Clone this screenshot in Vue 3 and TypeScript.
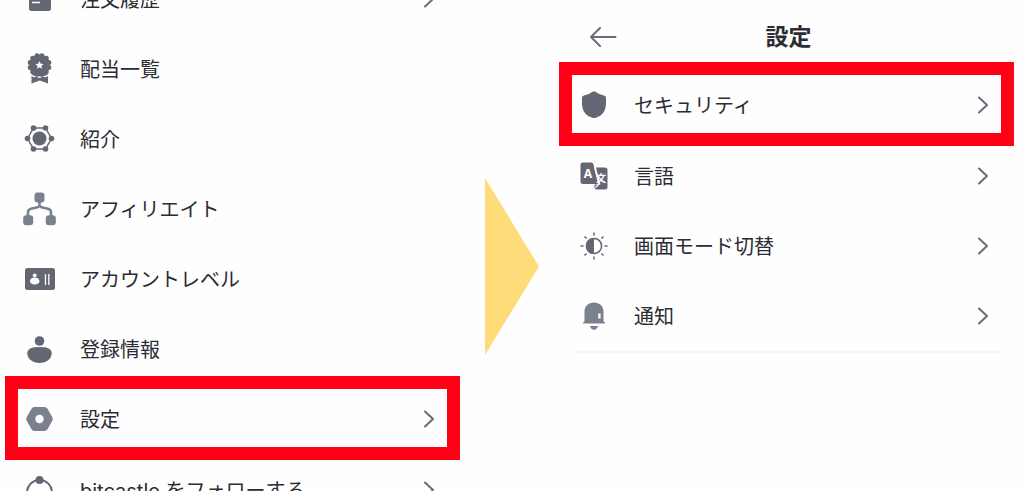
<script setup lang="ts">
interface MenuItem {
  icon: string
  label: string
  chevron?: boolean
  highlighted?: boolean
}

const accountMenu: MenuItem[] = [
  { icon: 'orders', label: '注文履歴', chevron: true },
  { icon: 'badge', label: '配当一覧' },
  { icon: 'referral', label: '紹介' },
  { icon: 'affiliate', label: 'アフィリエイト' },
  { icon: 'level', label: 'アカウントレベル' },
  { icon: 'person', label: '登録情報' },
  { icon: 'settings', label: '設定', chevron: true, highlighted: true },
  { icon: 'follow', label: 'bitcastle をフォローする', chevron: true },
]

const settingsMenu: MenuItem[] = [
  { icon: 'shield', label: 'セキュリティ', chevron: true, highlighted: true },
  { icon: 'language', label: '言語', chevron: true },
  { icon: 'theme', label: '画面モード切替', chevron: true },
  { icon: 'bell', label: '通知', chevron: true },
]

const panels = [
  { id: 'account', title: '', items: accountMenu },
  { id: 'settings', title: '設定', items: settingsMenu },
]

const rays = [0, 45, 90, 135, 180, 225, 270, 315]
const petals = Array.from({ length: 12 }, (_, i) => {
  const angle = ((i * 30 + 15) * Math.PI) / 180
  return { x: 16.5 + 9.6 * Math.cos(angle), y: 13 + 9.6 * Math.sin(angle) }
})
const nodes = [
  [4.5, 16.5],
  [10.5, 6],
  [22.5, 6],
  [28.5, 16.5],
  [22.5, 27],
  [10.5, 27],
]
</script>

<template>
  <main class="page">
    <template v-for="panel in panels" :key="panel.id">
      <svg v-if="panel.title" class="step" viewBox="0 0 54 177" aria-hidden="true">
        <path d="M0 0L54 88.5L0 177Z" fill="#ffdc7a" />
      </svg>
      <section class="panel" :class="panel.id">
        <header v-if="panel.title" class="header">
          <button class="back" type="button" aria-label="戻る">
            <svg width="28" height="22" viewBox="0 0 28 22" aria-hidden="true">
              <path d="M11 2L2 11L11 20M2 11H26.5" />
            </svg>
          </button>
          <h1 class="title">{{ panel.title }}</h1>
        </header>
        <ul class="menu">
          <li v-for="item in panel.items" :key="item.icon">
            <button class="row" :class="{ highlighted: item.highlighted }" type="button">
              <svg class="icon" viewBox="0 0 34 34" aria-hidden="true">
                <g v-if="item.icon === 'orders'">
                  <rect x="6" y="5" width="22" height="24" rx="2.5" />
                  <path class="cut-line" d="M9 20.5H17M9 14H25" />
                </g>
                <g v-else-if="item.icon === 'badge'">
                  <path d="M8.5 20H25V31.5L16.8 28.5L8.5 31.5Z" />
                  <path class="cut-line" d="M8 22.5Q11 26 13.5 23.5Q16.5 27 19.5 23.5Q22.5 26 25.5 22.5" />
                  <circle cx="16.5" cy="13" r="10.4" />
                  <circle v-for="(p, i) in petals" :key="i" :cx="p.x" :cy="p.y" r="2.5" />
                  <path class="cut" d="M16.5 9L17.7 11.7L20.6 12L18.4 13.9L19.1 16.8L16.5 15.3L13.9 16.8L14.6 13.9L12.4 12L15.3 11.7Z" />
                </g>
                <g v-else-if="item.icon === 'referral'">
                  <path class="line thin" d="M4.5 16.5L10.5 6H22.5L28.5 16.5L22.5 27H10.5Z" />
                  <circle cx="16.5" cy="16.5" r="7" />
                  <circle v-for="(n, i) in nodes" :key="i" :cx="n[0]" :cy="n[1]" r="2.8" />
                </g>
                <g v-else-if="item.icon === 'affiliate'" class="soft">
                  <path class="line thick" d="M16.5 8V14M5 25V20.5Q5 17.5 8 16.8L13.5 15.5Q16.5 14.8 16.5 13Q16.5 14.8 19.5 15.5L25 16.8Q28 17.5 28 20.5V25" />
                  <rect x="11.5" y="0.5" width="10" height="10" rx="3" />
                  <rect x="0.2" y="23.3" width="10" height="10" rx="3" />
                  <rect x="22.8" y="23.3" width="10" height="10" rx="3" />
                </g>
                <g v-else-if="item.icon === 'level'">
                  <rect x="2" y="6" width="30" height="22" rx="2.5" />
                  <circle class="cut" cx="11.7" cy="13.3" r="1.9" />
                  <ellipse class="cut" cx="11.7" cy="19" rx="4.8" ry="3.6" />
                  <path class="cut-line" d="M22.5 12V23M25.8 12V23" />
                </g>
                <g v-else-if="item.icon === 'person'">
                  <circle cx="16.5" cy="9" r="4.8" />
                  <path d="M11 15.2Q16.5 14.6 22 15.2C27 16 29 18.8 28.7 22C28 28 22 31 16.5 31S5 28 4.3 22C4 18.8 6 16 11 15.2Z" />
                </g>
                <g v-else-if="item.icon === 'settings'" class="soft">
                  <path d="M11.5 5H21.5Q23.5 5 24.5 6.8L29.3 15.2Q30.3 17 29.3 18.8L24.5 27.2Q23.5 29 21.5 29H11.5Q9.5 29 8.5 27.2L3.7 18.8Q2.7 17 3.7 15.2L8.5 6.8Q9.5 5 11.5 5Z" />
                  <circle class="cut" cx="16.5" cy="17" r="4.2" />
                </g>
                <g v-else-if="item.icon === 'follow'">
                  <circle class="line" cx="16.5" cy="19.5" r="12.5" />
                  <circle cx="16.5" cy="7" r="4" />
                </g>
                <path
                  v-else-if="item.icon === 'shield'"
                  d="M15.5 3.8Q17 2.7 18.5 3.8Q22.5 7 27 7.6Q29 8 29 10V15C29 23 25.5 27.5 18.8 29.8Q17 30.4 15.2 29.8C8.5 27.5 5 23 5 15V10Q5 8 7 7.6Q11.5 7 15.5 3.8Z"
                />
                <g v-else-if="item.icon === 'language'">
                  <path d="M19 8.5H28Q30.5 8.5 30.5 11V28Q30.5 30.5 28 30.5H20Q17.5 30.5 17.5 28V25.5H23.5Z" />
                  <path d="M6 3.500H14Q16 3.500 16.5 5.500L21.5 25H6Q3.5 25 3.5 22.500V6Q3.5 3.500 6 3.500Z" />
                  <path class="cut-line" d="M17.3 7L22 25L18.5 28.5" />
                  <text class="letter" x="11" y="18.5" text-anchor="middle">A</text>
                  <text class="glyph" x="24" y="23" text-anchor="middle">文</text>
                </g>
                <g v-else-if="item.icon === 'theme'">
                  <circle class="line thin" cx="17" cy="17" r="7.6" />
                  <path d="M17 9A8 8 0 0 0 17 25Z" />
                  <path
                    v-for="ray in rays"
                    :key="ray"
                    class="line ray"
                    d="M17 3.5V6.5"
                    :transform="`rotate(${ray} 17 17)`"
                  />
                </g>
                <g v-else class="soft">
                  <path d="M7.5 22.5V13C7.5 7 11.5 3.5 17 3.5S26.5 7 26.5 13V22.5L28 23.5V24.5H6V23.5Z" />
                  <path d="M13 27H21Q20.2 30.7 17 30.7T13 27Z" />
                  <rect class="cut" x="21.2" y="14.5" width="2.4" height="5" />
                </g>
              </svg>
              <span class="label">{{ item.label }}</span>
              <svg v-if="item.chevron" class="chevron" viewBox="0 0 12 20" aria-hidden="true">
                <path d="M2 2.5L10 10L2 17.5" />
              </svg>
            </button>
          </li>
        </ul>
      </section>
    </template>
  </main>
</template>

<style>
body {
  margin: 0;
  background: #fefefe;
}
</style>

<style scoped>
.page {
  display: flex;
  align-items: flex-start;
  box-sizing: border-box;
  height: 100vh;
  padding: 0 10px 0 5px;
  overflow: hidden;
  color: #2b2c34;
  font-family: Inter, "Noto Sans CJK JP", sans-serif;
}

.panel {
  flex: 1 1 0;
  min-width: 0;
}

.account {
  margin-top: -36px;
}

.step {
  flex: none;
  width: 54px;
  height: 177px;
  margin: 178px 20px 0 25px;
}

.header {
  display: grid;
  grid-template-columns: 60px 1fr 60px;
  align-items: center;
  box-sizing: border-box;
  height: 70px;
  padding: 4px 10px 0 14px;
}

.back {
  justify-self: center;
  display: flex;
  padding: 0;
  border: 0;
  background: none;
  cursor: pointer;
}

.title {
  margin: 0;
  font-size: 23px;
  line-height: 32px;
  font-weight: 700;
  text-align: center;
}

.menu {
  margin: 0;
  padding: 0;
  list-style: none;
}

.settings .menu::after {
  content: "";
  display: block;
  height: 2px;
  margin: 0 14px 0 18px;
  background: #f6f6f7;
}

.row {
  display: flex;
  align-items: center;
  gap: 23px;
  box-sizing: border-box;
  width: 100%;
  height: 70px;
  padding: 0 25px 0 18px;
  border: 0;
  background: none;
  color: inherit;
  font: inherit;
  font-size: 20px;
  line-height: 30px;
  text-align: left;
  cursor: pointer;
}

.row.highlighted {
  height: 84px;
  margin: -8px 0 -5px;
  padding: 2px 12px 0 5px;
  border: 13px solid #ff0016;
}

.label {
  flex: 1;
  padding-top: 2px;
  white-space: nowrap;
}

.icon {
  flex: none;
  width: 34px;
  height: 34px;
  fill: #646674;
  stroke: none;
  color: #646674;
}

.icon .soft {
  fill: #7a808d;
  color: #7a808d;
}

.icon .line {
  fill: none;
  stroke: currentColor;
  stroke-width: 2;
}

.icon .thin,
.icon .ray {
  stroke-width: 1.5;
}

.icon .thick {
  stroke-width: 2.6;
}

.icon .cut {
  fill: #fefefe;
}

.icon .cut-line {
  fill: none;
  stroke: #fefefe;
  stroke-width: 1.3;
}

.letter,
.glyph {
  fill: #fefefe;
  font-weight: 700;
}

.letter {
  font-size: 12px;
}

.glyph {
  font-size: 10px;
}

.chevron {
  flex: none;
  width: 12px;
  height: 20px;
}

.chevron path,
.back path {
  fill: none;
  stroke: #696b78;
  stroke-width: 2;
  stroke-linecap: round;
  stroke-linejoin: round;
}
</style>
